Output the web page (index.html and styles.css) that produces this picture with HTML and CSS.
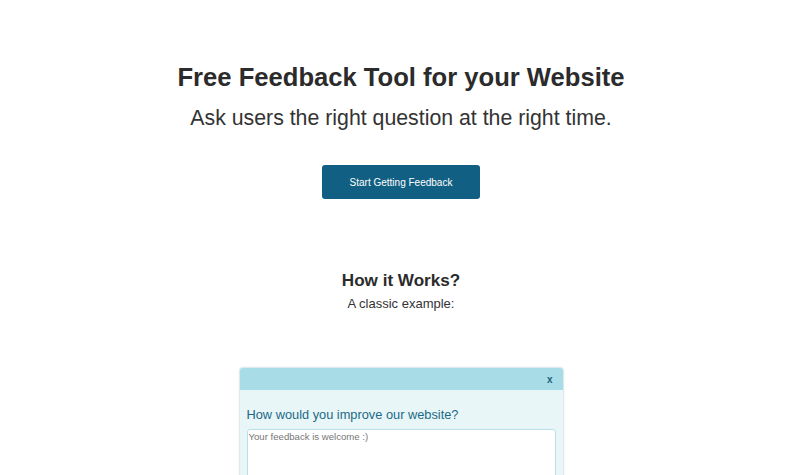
FILE: index.html
```html
<!DOCTYPE html>
<html>
<head>
<meta charset="utf-8">
<link rel="stylesheet" href="styles.css">
</head>
<body>
<main class="page">
  <section class="hero">
    <h1 class="title">Free Feedback Tool for your Website</h1>
    <p class="subtitle">Ask users the right question at the right time.</p>
    <a class="cta" href="#">Start Getting Feedback</a>
  </section>
  <section class="how">
    <h2 class="how-title">How it Works?</h2>
    <p class="how-sub">A classic example:</p>
  </section>
  <div class="widget">
    <div class="widget-head"><span class="close">x</span></div>
    <div class="widget-body">
      <p class="question">How would you improve our website?</p>
      <textarea class="answer" placeholder="Your feedback is welcome :)"></textarea>
    </div>
  </div>
</main>
</body>
</html>
```
FILE: styles.css
```css
html, body {
  margin: 0;
  padding: 0;
  background: #ffffff;
}
body {
  font-family: "Liberation Sans", Arial, sans-serif;
  color: #333333;
  overflow: hidden;
}
.page {
  display: flex;
  flex-direction: column;
  align-items: center;
  padding-top: 62px;
  padding-left: 7px;
}
.hero {
  display: flex;
  flex-direction: column;
  align-items: center;
}
.title {
  margin: 0;
  font-size: 25.6px;
  line-height: 30px;
  font-weight: bold;
  color: #2b2b2b;
}
.subtitle {
  margin: 13px 0 0;
  font-size: 21.3px;
  line-height: 26px;
  color: #333333;
}
.cta {
  margin-top: 34px;
  width: 158px;
  height: 34px;
  box-sizing: border-box;
  display: flex;
  align-items: center;
  justify-content: center;
  background: #115f82;
  color: #ffffff;
  text-decoration: none;
  font-size: 10px;
  border-radius: 3px;
}
.how {
  margin-top: 71px;
  display: flex;
  flex-direction: column;
  align-items: center;
}
.how-title {
  margin: 0;
  font-size: 17.1px;
  line-height: 22px;
  font-weight: bold;
  color: #2b2b2b;
}
.how-sub {
  margin: 3px 0 0;
  font-size: 13px;
  line-height: 18px;
  color: #333333;
}
.widget {
  margin-top: 54px;
  width: 325px;
  box-sizing: border-box;
  border: 1px solid #dde9ec;
  border-radius: 4px;
  overflow: hidden;
  background: #e9f6f7;
  box-shadow: 0 0 2px rgba(0,0,0,0.08);
}
.widget-head {
  height: 22px;
  background: #a8dde8;
  display: flex;
  align-items: center;
  justify-content: flex-end;
  padding-right: 10px;
}
.close {
  font-size: 10px;
  font-weight: bold;
  color: #1e5f7a;
}
.widget-body {
  padding: 16px 7px 0;
  height: 120px;
}
.question {
  margin: 0;
  font-size: 12.8px;
  line-height: 18px;
  color: #1b6a87;
}
.answer {
  display: block;
  margin-top: 5px;
  width: 100%;
  height: 80px;
  box-sizing: border-box;
  border: 1px solid #b7e0ea;
  border-radius: 3px;
  background: #ffffff;
  padding: 1px 1px;
  font-family: "Liberation Sans", Arial, sans-serif;
  font-size: 9.6px;
  resize: none;
}
.answer::placeholder {
  color: #777777;
}
```
